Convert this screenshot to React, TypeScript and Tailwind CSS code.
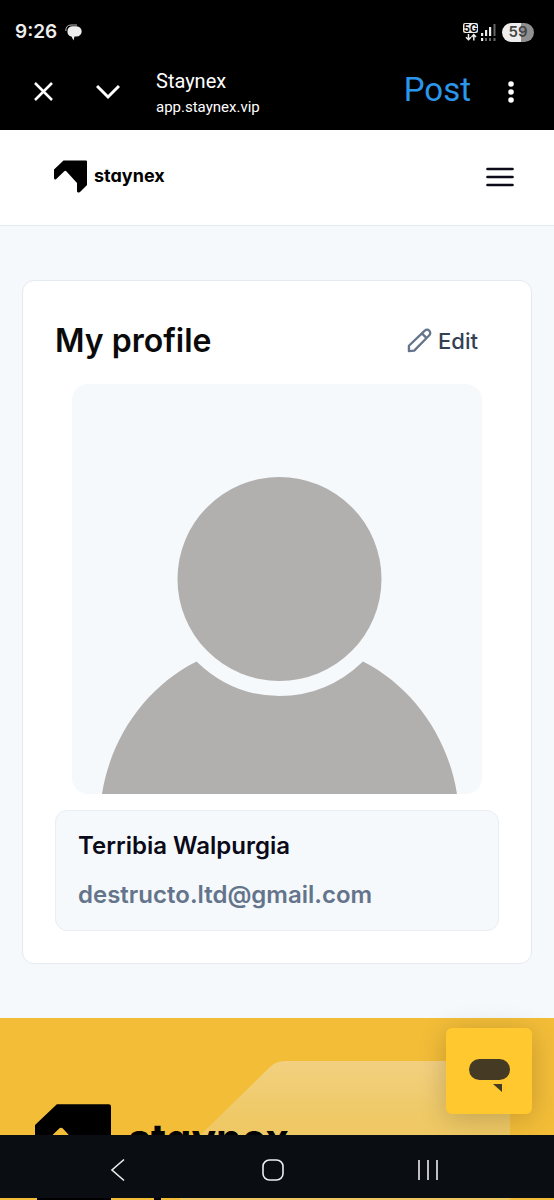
import React from "react";

function StaynexMark({ className }: { className: string }) {
  return (
    <svg viewBox="0 0 33 33" className={className} aria-hidden="true">
      <path
        d="M9.500 .5h22.500Q33 .5 33 1.500v23.500L26 32q-2.500 1.500-3-.8V23L12.300 11.300Q11.300 10.300 10.300 11.300L2 19.300Q0 20 0 18V9.500Z"
        fill="#000"
      />
    </svg>
  );
}

function ChatIcon() {
  return (
    <svg viewBox="0 0 17 17" className="h-[17px] w-[17px]" aria-hidden="true">
      <path d="M.8 7Q.8 1 6 1h6" fill="none" stroke="#bbb" strokeWidth="1" />
      <path d="M7 2.200h4.500a5.200 5.200 0 0 1 0 10.400H9.500L8.500 16.500 6.500 12.600A5.300 5.300 0 0 1 7 2.200Z" fill="#ededed" />
    </svg>
  );
}

function StatusIcons() {
  return (
    <div className="flex items-center gap-[3px]">
      <div className="flex flex-col items-center">
        <span className="flex h-[10px] w-[15px] items-center justify-center rounded-[2px] bg-[#ededed] text-[10px] font-bold text-black">5G</span>
        <svg viewBox="0 0 12 8" className="h-2 w-3" fill="none" stroke="#ededed" strokeWidth="1.500" aria-hidden="true">
          <path d="M3.500 1v5.500M1 4.200l2.500 2.500L6 4.200M8.800 7.500V1.500M6.500 4l2.300-2.500L11 4" />
        </svg>
      </div>
      <svg viewBox="0 0 15 17" className="h-[17px] w-[15px]" aria-hidden="true">
        <path d="M0 9h2.200v3H0zM4 6h2.200v6H4zM8 3h2.200v9H8zM0 14h2.200v3H0z" fill="#ededed" />
        <path d="M12.500 0h2v12h-2zM4 14h2v3H4zM8 14h2v3H8zM12.500 14h2v3h-2z" fill="#666" />
      </svg>
      <span className="ml-[3px] flex h-[19px] w-8 items-center justify-center rounded-full bg-linear-to-r from-[#ededed] from-60% to-[#909090] to-60% text-[15px] font-semibold text-[#444]">59</span>
    </div>
  );
}

export default function App() {
  return (
    <div className="relative flex h-screen flex-col overflow-hidden bg-[#f5f9fc] font-['Inter',sans-serif]">
      <div className="shrink-0 bg-black text-white">
        <div className="flex h-[62px] items-center justify-between pt-[2px] pr-5 pl-[15px]">
          <div className="flex items-center gap-2">
            <span className="text-[19px] font-semibold text-[#ededed]">9:26</span>
            <ChatIcon />
          </div>
          <StatusIcons />
        </div>
        <div className="flex h-[68px] items-start pr-[31px] pl-8">
          <button aria-label="Close" className="mt-[18px]">
            <svg viewBox="0 0 24 24" className="h-6 w-6" fill="none" stroke="#fff" strokeWidth="2.500" aria-hidden="true">
              <path d="m3 3 17 17M20 3 3 20" />
            </svg>
          </button>
          <button aria-label="Collapse" className="mt-[18px] ml-10">
            <svg viewBox="0 0 24 24" className="h-6 w-6" fill="none" stroke="#fff" strokeWidth="3" aria-hidden="true">
              <path d="m1 6 11 11L23 6" />
            </svg>
          </button>
          <div className="ml-9 flex flex-1 flex-col pt-[6px] font-['Roboto',sans-serif] leading-[26px]">
            <span className="text-[20px]">Staynex</span>
            <span className="text-[15px]">app.staynex.vip</span>
          </div>
          <button className="mt-2 font-['Roboto',sans-serif] text-[33px] leading-10 text-[#2b97ea]">Post</button>
          <button aria-label="More options" className="mt-[18px] ml-7">
            <svg viewBox="0 0 24 24" className="h-6 w-6" fill="#fff" aria-hidden="true">
              <circle cx="12" cy="4" r="2.800" />
              <circle cx="12" cy="12" r="2.800" />
              <circle cx="12" cy="20" r="2.800" />
            </svg>
          </button>
        </div>
      </div>

      <header className="flex h-24 shrink-0 items-center justify-between border-b border-[#e5eaf0] bg-white pr-10 pb-[2px] pl-[54px]">
        <a href="#" className="flex items-center gap-[7px]">
          <StaynexMark className="h-[33px] w-[33px]" />
          <span className="pb-[2px] text-[18px] leading-6 font-bold [font-feature-settings:'cv11']">staynex</span>
        </a>
        <button aria-label="Open menu">
          <svg viewBox="0 0 28 22" className="h-[22px] w-7" fill="none" stroke="#0a0a18" strokeWidth="2.600" strokeLinecap="round" aria-hidden="true">
            <path d="M1.500 3h25M1.500 11h25M1.500 19h25" />
          </svg>
        </button>
      </header>

      <main className="shrink-0 px-[22px] py-[54px]">
        <section className="rounded-xl border border-[#e5eaf0] bg-white p-8">
          <div className="flex h-[55px] items-center justify-between pr-[21px]">
            <h1 className="text-[32px] leading-10 font-semibold text-[#0a0a0a]">My profile</h1>
            <button className="flex items-center gap-[6px] text-[22px] leading-8 font-medium text-[#334155]">
              <svg viewBox="0 0 26 26" className="h-[25px] w-[25px]" fill="none" stroke="#64748b" strokeWidth="2.400" strokeLinejoin="round" aria-hidden="true">
                <path d="M2 24v-5.500L18.500 2.800a3.300 3.300 0 0 1 4.700 4.700L7.500 23.500ZM15.500 5.600l4.900 4.900" />
              </svg>
              Edit
            </button>
          </div>
          <div className="mx-[17px] mt-4 overflow-hidden rounded-2xl bg-[#f5f9fc]">
            <svg viewBox="0 0 410 410" className="block w-full" role="img" aria-label="Profile picture">
              <g fill="#b2b0ae">
                <circle cx="207.500" cy="195" r="102" />
                <path d="M30 410C39 353 74 303 124.500 277.500Q160 312 207.500 312T291 277.500C341 303 376 353 385 410Z" />
              </g>
            </svg>
          </div>
          <div className="mt-4 flex flex-col gap-[15px] rounded-xl border border-[#e9eef4] bg-[#f5f9fc] px-[22px] py-[18px]">
            <p className="text-[24px] leading-[34px] font-semibold text-[#0a0a18]">Terribia Walpurgia</p>
            <p className="text-[24px] leading-[34px] font-semibold text-[#64748b]">destructo.ltd@gmail.com</p>
          </div>
        </section>
      </main>

      <footer className="relative flex-1 overflow-hidden bg-[#f3bd38]">
        <svg viewBox="0 0 330 139" className="absolute top-[43px] right-11 h-[139px] w-[330px]" aria-hidden="true">
          <defs>
            <linearGradient id="panel" x1="0" y1="0" x2="0" y2="1">
              <stop offset="0" stopColor="#f2d080" />
              <stop offset=".4" stopColor="#efc966" />
              <stop offset="1" stopColor="#efc760" />
            </linearGradient>
          </defs>
          <path d="M0 139V94L90 6Q96 0 105 0H314Q330 0 330 16V139Z" fill="url(#panel)" />
        </svg>
        <a href="#" className="relative flex items-center gap-[17px] pt-[85px] pl-[35px]">
          <StaynexMark className="h-[76px] w-[76px]" />
          <span className="pb-1 text-[41px] leading-[66px] font-bold [font-feature-settings:'cv11']">staynex</span>
        </a>
      </footer>

      <button aria-label="Open chat" className="absolute right-[22px] bottom-[86px] flex h-[86px] w-[86px] items-center justify-center rounded-md bg-[#ffc82e] pt-[10px] shadow-[0_4px_28px_rgba(0,0,0,0.2)]">
        <svg viewBox="0 0 42 34" className="h-[34px] w-[42px]" fill="#453b25" aria-hidden="true">
          <rect x="1" width="41" height="21" rx="10.500" />
          <path d="M25 25h9v8Z" />
        </svg>
      </button>

      <div className="absolute inset-x-0 bottom-0">
        <nav aria-label="System navigation" className="flex h-[63px] items-center justify-around bg-[#0a0e12] pt-[6px] pr-12 pl-10">
          <button aria-label="Back">
            <svg viewBox="0 0 24 24" className="h-6 w-6" fill="none" stroke="#ededed" strokeWidth="1.600" aria-hidden="true">
              <path d="M18 1.500 6 12l12 10.500" />
            </svg>
          </button>
          <button aria-label="Home">
            <svg viewBox="0 0 24 24" className="h-6 w-6" fill="none" stroke="#ededed" strokeWidth="1.600" aria-hidden="true">
              <rect x="2" y="2" width="20" height="20" rx="6.500" />
            </svg>
          </button>
          <button aria-label="Recent apps">
            <svg viewBox="0 0 24 24" className="h-6 w-6" fill="none" stroke="#ededed" strokeWidth="1.600" aria-hidden="true">
              <path d="M3 2v20M12 2v20M21 2v20" />
            </svg>
          </button>
        </nav>
        <svg viewBox="0 0 162 2" className="block h-[2px] w-[162px]" aria-hidden="true">
          <path d="M37 0h74v2H37zM154 0h7v2h-7z" fill="#000" />
        </svg>
      </div>
    </div>
  );
}
